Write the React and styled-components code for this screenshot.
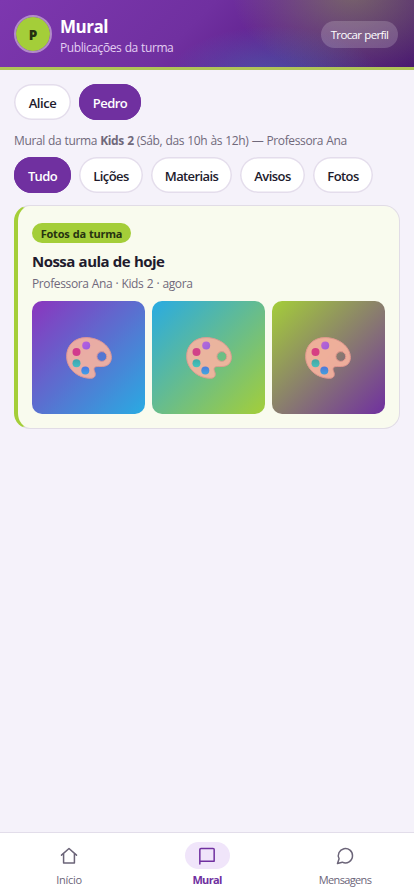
import React from "react";
import styled, { createGlobalStyle } from "styled-components";

const GlobalStyle = createGlobalStyle`
  * { box-sizing: border-box; }
  body {
    margin: 0;
    background: #f5f2fa;
    font-family: "Open Sans", "Noto Sans", sans-serif;
    color: #211a2c;
  }
  button { font-family: inherit; border: 0; padding: 0; }
`;

const Screen = styled.div`
  height: 896px;
  display: flex;
  flex-direction: column;
`;

const Text = styled.span`
  display: block;
  margin: 0;
  white-space: nowrap;
  font-size: ${(p) => p.$size}px;
  line-height: ${(p) => p.$line || 18}px;
  font-weight: ${(p) => p.$weight || 400};
  letter-spacing: ${(p) => p.$track || 0}px;
  word-spacing: 0.5px;
  color: ${(p) => p.$color || "inherit"};
`;

const Header = styled.header`
  height: 70px;
  flex: none;
  display: flex;
  align-items: center;
  padding: 1px 16px 0 14px;
  border-bottom: 3px solid #afc457;
  background:
    radial-gradient(120px 85px at 85% -12%, rgba(164, 206, 57, 0.38), transparent 100%),
    radial-gradient(110px 58px at 66% 125%, rgba(41, 171, 226, 0.36), transparent 100%),
    linear-gradient(135deg, #7d37af 0%, #7030a0 45%, #662795 58%, #4a1a70 100%);
`;

const Avatar = styled.div`
  width: 38px;
  height: 38px;
  flex: none;
  display: flex;
  align-items: center;
  justify-content: center;
  padding-top: 1px;
  border-radius: 50%;
  border: 2px solid #b28bc9;
  background: #a4ce39;
  background-clip: padding-box;
`;

const Heading = styled.div`
  flex: 1;
  margin-left: 8px;
  padding-top: 4px;
`;

const ProfileButton = styled.button`
  width: 77px;
  height: 27px;
  display: flex;
  align-items: center;
  justify-content: center;
  padding-top: 1px;
  border-radius: 14px;
  background: rgba(255, 255, 255, 0.18);
`;

const Main = styled.main`
  flex: 1;
  padding: 14px 14px 0;
`;

const ChipRow = styled.div`
  display: flex;
  gap: 8px;
`;

const Chip = styled.button`
  width: ${(p) => p.$width}px;
  height: 36px;
  display: flex;
  align-items: center;
  justify-content: center;
  padding-top: 1px;
  border-radius: 18px;
  box-shadow: inset 0 0 0 1.5px ${(p) => (p.$active ? "#7030a0" : "#e4ddec")};
  background: ${(p) => (p.$active ? "#7030a0" : "#fff")};
  color: ${(p) => (p.$active ? "#fff" : "#211a2c")};
`;

const ClassInfo = styled.div`
  height: 37px;
  padding-top: 12px;
  b { font-weight: 700; }
`;

const Card = styled.article`
  height: 224px;
  margin-top: 12px;
  padding: 17px 14px 0;
  border: 1px solid #e1dce6;
  border-left: 4px solid #a4ce39;
  border-radius: 16px;
  background: #f9fbee;
`;

const Badge = styled.div`
  width: 99px;
  height: 20px;
  display: flex;
  align-items: center;
  justify-content: center;
  padding-top: 2px;
  border-radius: 10px;
  background: #a4ce39;
`;

const CardText = styled.div`
  height: 58px;
  padding-top: 7px;
`;

const Photos = styled.div`
  display: grid;
  grid-template-columns: repeat(3, 1fr);
  gap: 6.5px;
`;

const Photo = styled.div`
  aspect-ratio: 1;
  display: flex;
  align-items: center;
  justify-content: center;
  border-radius: 10px;
  background: linear-gradient(135deg, ${(p) => p.$from}, ${(p) => p.$to});
`;

const Nav = styled.nav`
  height: 64px;
  flex: none;
  display: grid;
  grid-template-columns: repeat(3, 1fr);
  background: #fff;
  border-top: 1px solid #e2ddea;
`;

const NavItem = styled.div`
  display: flex;
  flex-direction: column;
  align-items: center;
  padding-top: 9px;
  color: ${(p) => (p.$active ? "#7030a0" : "#6b6478")};
`;

const NavPill = styled.div`
  width: 45px;
  height: 27px;
  margin-bottom: 2px;
  display: flex;
  align-items: center;
  justify-content: center;
  border-radius: 14px;
  background: ${(p) => (p.$active ? "#f0e5fa" : "transparent")};
`;

const NAV = [
  { label: "Início", track: -0.3, paths: ["M3 11 12 3l9 8", "M5.5 9.5V20.5h13V9.5"] },
  { label: "Mural", track: -0.7, active: true, paths: ["M3.4 21.5V4.4A1.4 1.4 0 0 1 4.8 3h14.4a1.4 1.4 0 0 1 1.4 1.4V18.4H3.4"] },
  { label: "Mensagens", track: -0.65, paths: ["M21 11.8a8.5 8.5 0 0 1-12.3 7.6L3 21l1.9-5.7A8.5 8.5 0 1 1 21 11.8z"] },
];

const FILTERS = [
  ["Tudo", 57, -0.6],
  ["Lições", 64, -0.6],
  ["Materiais", 81, -0.6],
  ["Avisos", 65, -0.55],
  ["Fotos", 60, -0.6],
];

const PHOTOS = [
  ["#8b35be", "#29abe2"],
  ["#29abe2", "#a4ce39"],
  ["#a4ce39", "#7030a0"],
];

function Palette({ id }) {
  return (
    <svg width="48" height="44" viewBox="0 0 48 44" opacity="0.9">
      <defs>
        <linearGradient id={`violet${id}`} x2="1" y2="1"><stop stopColor="#c861df" /><stop offset="1" stopColor="#9b5be5" /></linearGradient>
        <linearGradient id={`teal${id}`} x2="0" y2="1"><stop stopColor="#3caaa8" /><stop offset="1" stopColor="#42c6c6" /></linearGradient>
        <linearGradient id={`blue${id}`} x2="0" y2="1"><stop stopColor="#4b75e5" /><stop offset="1" stopColor="#3ba6e9" /></linearGradient>
      </defs>
      <path
        fillRule="evenodd"
        fill="#f9b4a0"
        stroke="#e99a93"
        strokeWidth="1"
        d="M21 1.6C9.5 1.6 1.6 9.5 1.6 20.5C1.6 32.5 12.5 42.3 25.5 42.3C29.8 42.3 31.2 39.4 29.7 35.7C28.1 31.9 29.3 30.5 33.3 30.5H37.2C43 30.5 46.4 26.6 46.4 21.5C46.4 10.5 34.5 1.6 21 1.6ZM36.8 15.6A4.9 4.9 0 1 1 36.8 25.4A4.9 4.9 0 1 1 36.8 15.6Z"
      />
      <circle cx="21.2" cy="9.5" r="4" fill={`url(#violet${id})`} />
      <circle cx="11.5" cy="16" r="4" fill="#df3687" />
      <circle cx="11.5" cy="27.2" r="4" fill={`url(#teal${id})`} />
      <circle cx="20.3" cy="34.5" r="4" fill={`url(#blue${id})`} />
    </svg>
  );
}

export default function App() {
  return (
    <>
      <GlobalStyle />
      <Screen>
        <Header>
          <Avatar><Text $size={13.5} $weight={800} $color="#243010">P</Text></Avatar>
          <Heading>
            <Text as="h1" $size={17} $line={23} $weight={700} $track={-0.5} $color="#fff">Mural</Text>
            <Text $size={12} $line={19} $track={-0.4} $color="#e3cef2">Publicações da turma</Text>
          </Heading>
          <ProfileButton><Text $size={11.5} $track={-0.63} $weight={500} $color="#fff">Trocar perfil</Text></ProfileButton>
        </Header>
        <Main>
          <ChipRow>
            <Chip $width={57}><Text $size={13} $weight={600} $track={-0.45}>Alice</Text></Chip>
            <Chip $width={62} $active><Text $size={13} $weight={600} $track={-0.55}>Pedro</Text></Chip>
          </ChipRow>
          <ClassInfo>
            <Text $size={12} $track={-0.38} $color="#70697b">Mural da turma <b>Kids 2</b> (Sáb, das 10h às 12h) — Professora Ana</Text>
          </ClassInfo>
          <ChipRow>
            {FILTERS.map(([label, width, track], i) => (
              <Chip key={label} $width={width} $active={i === 0}>
                <Text $size={13} $weight={600} $track={track}>{label}</Text>
              </Chip>
            ))}
          </ChipRow>
          <Card>
            <Badge><Text $size={11} $weight={700} $track={-0.22} $color="#263310">Fotos da turma</Text></Badge>
            <CardText>
              <Text $size={15} $line={22} $weight={700} $track={-0.54}>Nossa aula de hoje</Text>
              <Text $size={12} $line={23} $track={-0.38} $color="#70697b">Professora Ana · Kids 2 · agora</Text>
            </CardText>
            <Photos>
              {PHOTOS.map(([from, to], i) => (
                <Photo key={from} $from={from} $to={to}><Palette id={i} /></Photo>
              ))}
            </Photos>
          </Card>
        </Main>
        <Nav>
          {NAV.map(({ label, track, active, paths }) => (
            <NavItem key={label} $active={active}>
              <NavPill $active={active}>
                <svg width="20" height="20" viewBox="0 0 24 24" fill="none" stroke="currentColor" strokeWidth="1.8" strokeLinecap="round" strokeLinejoin="round">
                  {paths.map((d) => <path key={d} d={d} />)}
                </svg>
              </NavPill>
              <Text $size={11} $weight={active ? 700 : 400} $track={track}>{label}</Text>
            </NavItem>
          ))}
        </Nav>
      </Screen>
    </>
  );
}
